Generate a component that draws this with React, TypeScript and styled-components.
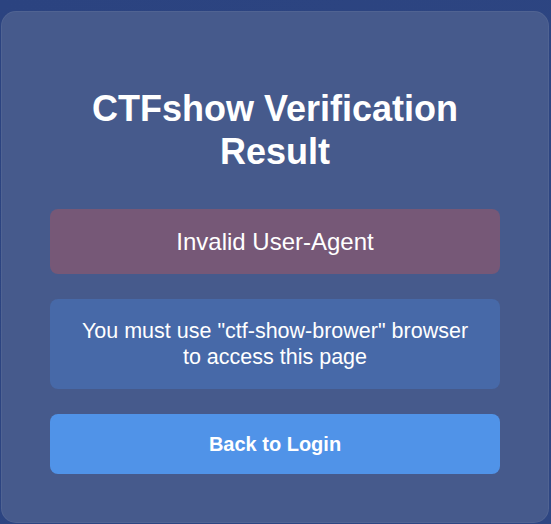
import * as React from 'react';
import styled, { createGlobalStyle } from 'styled-components';

const GlobalStyle = createGlobalStyle`
  html, body {
    margin: 0;
    padding: 0;
  }

  body {
    background: linear-gradient(135deg, #2b4380, #2e4682);
    font-family: "Liberation Sans", Arial, sans-serif;
    color: #fff;
    min-height: 524px;
  }
`;

const Page = styled.div`
  display: flex;
  padding: 11px 2px 2px 1px;
`;

const Card = styled.div`
  flex: 1;
  display: flex;
  flex-direction: column;
  padding: 48px;
  background: #465a8c;
  border: 1px solid rgba(255, 255, 255, 0.06);
  border-radius: 15px;
  text-align: center;
`;

const Title = styled.h1`
  max-width: 420px;
  margin: 27px auto 36px;
  font-size: 36px;
  line-height: 43px;
  font-weight: 700;
`;

const Message = styled.div<{ $tone: 'error' | 'info' }>`
  margin-bottom: 25px;
  padding: ${p => (p.$tone === 'error' ? '20px' : '19px 30px')};
  border-radius: 8px;
  background: ${p => (p.$tone === 'error' ? '#765877' : '#4769a8')};
  font-size: ${p => (p.$tone === 'error' ? '24px' : '21.5px')};
  line-height: ${p => (p.$tone === 'error' ? '25px' : '26px')};
`;

const BackButton = styled.button`
  display: block;
  width: 100%;
  height: 60px;
  padding: 0;
  border: none;
  border-radius: 8px;
  background: #5093e8;
  color: #fff;
  font-family: inherit;
  font-size: 20px;
  font-weight: 700;
  cursor: pointer;
`;

export default function App() {
  return (
    <>
      <GlobalStyle />
      <Page>
        <Card>
          <Title>CTFshow Verification Result</Title>
          <Message $tone="error">Invalid User-Agent</Message>
          <Message $tone="info">
            You must use "ctf-show-brower" browser to access this page
          </Message>
          <BackButton>Back to Login</BackButton>
        </Card>
      </Page>
    </>
  );
}
